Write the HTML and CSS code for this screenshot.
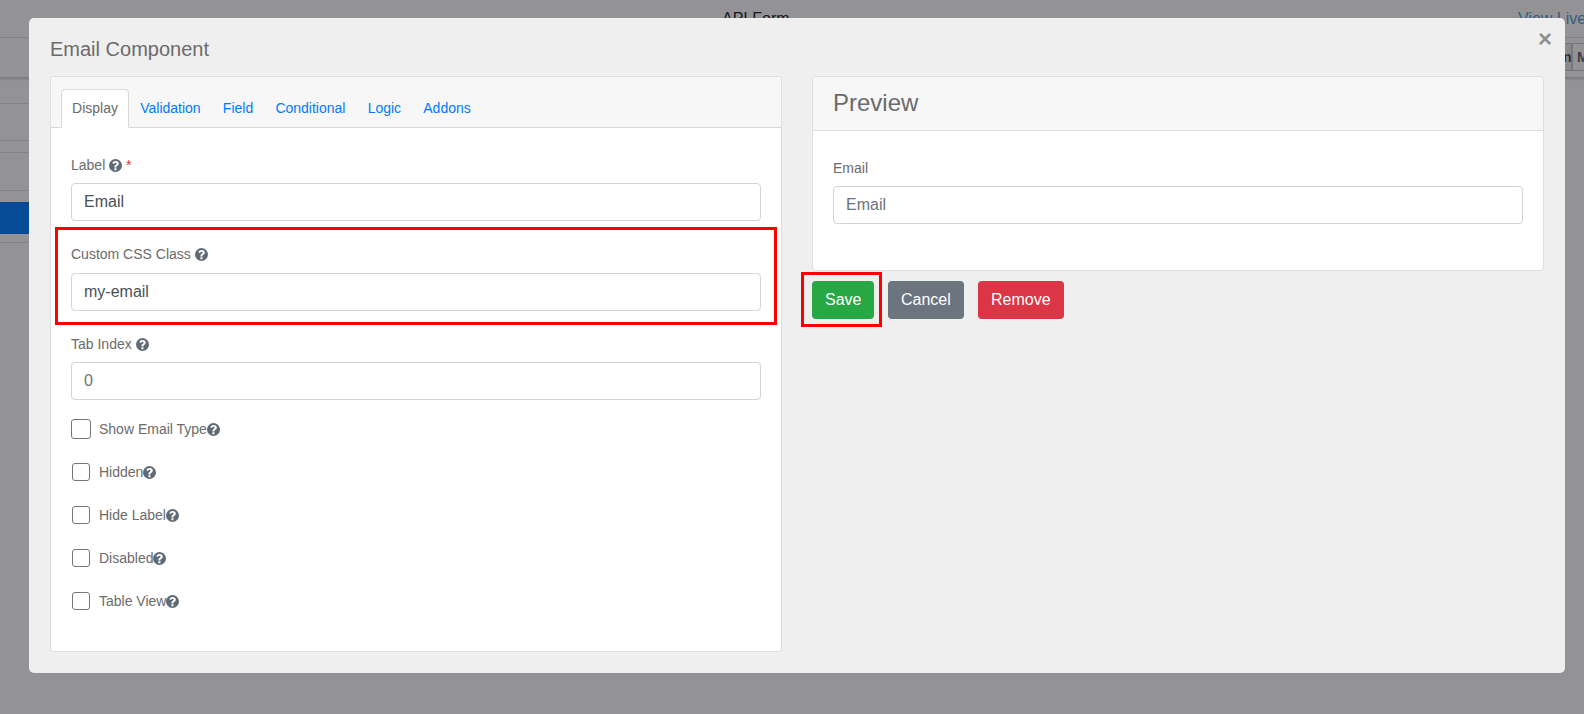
FILE: index.html
```html
<!DOCTYPE html>
<html lang="en">
<head>
<meta charset="utf-8">
<title>Email Component</title>
<link rel="stylesheet" href="styles.css">
</head>
<body>
<svg class="defs" width="0" height="0" aria-hidden="true">
  <symbol id="q" viewBox="0 0 24 24">
    <path fill="currentColor" fill-rule="evenodd" d="M12 0a12 12 0 1 1 0 24a12 12 0 0 1 0-24zM10 17v3.6h3.8V17zM12.2 3.6c-3 0-5.2 1.500-6 4.300l3.100 1.100c.5-1.500 1.400-2.300 2.800-2.300 1.300 0 2.100.7 2.100 1.700 0 .9-.6 1.400-1.700 2.200-1.500 1-2.500 2-2.500 4v.9h3.800v-.6c0-1 .5-1.500 1.600-2.300 1.500-1 2.700-2.200 2.700-4.300 0-2.800-2.400-4.700-5.900-4.700z"/>
  </symbol>
</svg>

<div class="backdrop-page">
  <header class="bg-top"><span class="bg-title">API Form</span><a class="bg-live">View Live</a></header>
  <div class="bg-toolbar"><span class="bg-btn">n</span><span class="bg-btn bg-btn-m">M</span></div>
  <div class="bg-shadow"></div>
  <div class="bg-side">
    <div class="bg-row bg-r1"></div>
    <div class="bg-row bg-r2"></div>
    <div class="bg-row bg-r3"></div>
    <div class="bg-row bg-r5"></div>
    <div class="bg-active"></div>
    <div class="bg-row bg-r4"></div>
  </div>
</div>
<div class="overlay"></div>

<main class="modal">
  <button class="close" type="button" aria-label="Close">×</button>
  <h2 class="modal-title">Email Component</h2>
  <div class="columns">
    <section class="card edit-card">
      <nav class="tabs">
        <a class="tab active">Display</a>
        <a class="tab">Validation</a>
        <a class="tab">Field</a>
        <a class="tab">Conditional</a>
        <a class="tab">Logic</a>
        <a class="tab">Addons</a>
      </nav>
      <div class="edit-body">
        <div class="field">
          <label class="label">Label <svg class="help"><use href="#q"/></svg> <span class="req">*</span></label>
          <input class="input" type="text" value="Email">
        </div>
        <div class="field highlighted">
          <label class="label">Custom CSS Class <svg class="help"><use href="#q"/></svg></label>
          <input class="input" type="text" value="my-email">
        </div>
        <div class="field field-last">
          <label class="label">Tab Index <svg class="help"><use href="#q"/></svg></label>
          <input class="input" type="text" placeholder="0">
        </div>
        <div class="check first"><span class="box big"></span><span>Show Email Type</span><svg class="help"><use href="#q"/></svg></div>
        <div class="check"><span class="box"></span><span>Hidden</span><svg class="help"><use href="#q"/></svg></div>
        <div class="check"><span class="box"></span><span>Hide Label</span><svg class="help"><use href="#q"/></svg></div>
        <div class="check"><span class="box"></span><span>Disabled</span><svg class="help"><use href="#q"/></svg></div>
        <div class="check"><span class="box"></span><span>Table View</span><svg class="help"><use href="#q"/></svg></div>
      </div>
    </section>
    <div class="side">
      <section class="card preview-card">
        <h3 class="preview-title">Preview</h3>
        <div class="preview-body">
          <label class="label">Email</label>
          <input class="input" type="text" placeholder="Email">
        </div>
      </section>
      <div class="actions">
        <button class="btn save" type="button">Save</button>
        <button class="btn cancel" type="button">Cancel</button>
        <button class="btn remove" type="button">Remove</button>
      </div>
    </div>
  </div>
</main>
</body>
</html>
```

FILE: styles.css
```css
* { box-sizing: border-box; }
html, body { margin: 0; height: 714px; overflow: hidden; }
body { font-family: "Liberation Sans", Arial, sans-serif; font-size: 14px; color: #212529; background: #fff; }
.defs { position: absolute; }

/* page behind the dialog */
.backdrop-page { height: 714px; overflow: hidden; }
.bg-top { height: 38px; display: flex; padding: 10px 0 0 722px; position: relative; border-bottom: 1px solid #dee2e6; font-size: 16px; }
.bg-title { color: #222; }
.bg-live { position: absolute; left: 1518px; top: 10px; color: #5b9bd5; font-size: 16px; white-space: nowrap; }
.bg-toolbar { height: 39px; display: flex; padding: 5px 0 0 1540px; width: 1600px; }
.bg-btn { width: 32px; height: 28px; flex: none; border: 1px solid #ccc; background: #eee; font-weight: 700; font-size: 14px; padding: 5px 0 0 22px; color: #356; }
.bg-btn-m { width: 28px; padding-left: 4px; background: #fff; color: #667; }
.bg-shadow { height: 4px; background: linear-gradient(#d0d0d0, #fff); }
.bg-side { width: 300px; }
.bg-row { border-bottom: 1px solid #dee2e6; }
.bg-r1 { height: 23px; }
.bg-r2 { height: 37px; }
.bg-r3 { height: 12px; }
.bg-r5 { height: 38px; }
.bg-active { height: 32px; margin-top: 11px; background: #007bff; }
.bg-r4 { height: 9px; }
.overlay { position: fixed; inset: 0; background: rgba(16, 16, 20, .45); }

/* dialog */
.modal { position: fixed; left: 29px; top: 18px; width: 1536px; height: 655px; background: #efefef; border-radius: 5px; padding: 16px 21px 0; color: #6b6b6b; }
.close { position: absolute; right: 13px; top: 8px; border: 0; background: none; padding: 0; font: 700 24px/26px "Liberation Sans", Arial, sans-serif; color: #8f8f8f; }
.modal-title { margin: 0; font-size: 20px; font-weight: 400; line-height: 30px; height: 42px; color: #6b6b6b; }
.columns { display: flex; gap: 30px; }
.card { background: #fff; border: 1px solid #dedede; border-radius: 4px; }
.edit-card { width: 732px; height: 576px; flex: none; }
.side { width: 732px; flex: none; }

.tabs { height: 51px; display: flex; align-items: flex-end; background: #f7f7f7; border-bottom: 1px solid #d9d9d9; padding-left: 10px; border-radius: 4px 4px 0 0; }
.tab { height: 39px; margin-bottom: -1px; padding: 10px 10.1px 0; color: #007bff; border: 1px solid transparent; border-radius: 4px 4px 0 0; line-height: 16px; }
.tab.active { background: #fff; color: #6b6b6b; border-color: #d9d9d9 #d9d9d9 #fff; }

.edit-body { padding: 27px 20px 0; }
.field { margin-bottom: 23px; }
.field-last { margin-bottom: 19px; }
.label { display: block; line-height: 21px; margin-bottom: 7px; color: #6b6b6b; }
.help { width: 13px; height: 13px; color: #606a74; vertical-align: -1.500px; flex: none; }
.req { color: #e03040; }
.input { display: block; width: 100%; height: 38px; border: 1px solid #ced4da; border-radius: 4px; padding: 6px 12px; font: 16px/24px "Liberation Sans", Arial, sans-serif; color: #495057; background: #fff; outline: 0; }
.input::placeholder { color: #6c757d; opacity: 1; }

.highlighted { position: relative; }
.highlighted .label { margin-bottom: 8px; }
.highlighted::after { content: ""; position: absolute; inset: -17px -16px -14px -16px; border: 3px solid #f00; pointer-events: none; }

.check { display: flex; align-items: center; height: 20px; margin-top: 23px; color: #6b6b6b; }
.check.first { margin-top: 19px; }
.box { width: 18px; height: 18px; margin: 0 9px 0 1px; border: 1.500px solid #767676; border-radius: 3px; background: #fff; flex: none; }
.box.big { width: 20px; height: 20px; margin: 0 8px 0 0; }

.preview-card { height: 195px; }
.preview-title { margin: 0; height: 54px; font-size: 24px; font-weight: 400; line-height: 28px; padding: 12px 20px 0; background: #f7f7f7; border-bottom: 1px solid #dedede; color: #6b6b6b; border-radius: 4px 4px 0 0; }
.preview-body { padding: 27px 20px 0; }

.actions { display: flex; gap: 14px; margin-top: 10px; position: relative; }
.btn { height: 38px; border: 0; border-radius: 4px; padding: 0 13px; font: 16px "Liberation Sans", Arial, sans-serif; color: #fff; }
.save { background: #28a745; position: relative; width: 62px; }
.save::after { content: ""; position: absolute; inset: -9px -8px -8px -11px; border: 3px solid #f00; pointer-events: none; }
.cancel { background: #6c757d; }
.remove { background: #dc3545; width: 86px; }
```
